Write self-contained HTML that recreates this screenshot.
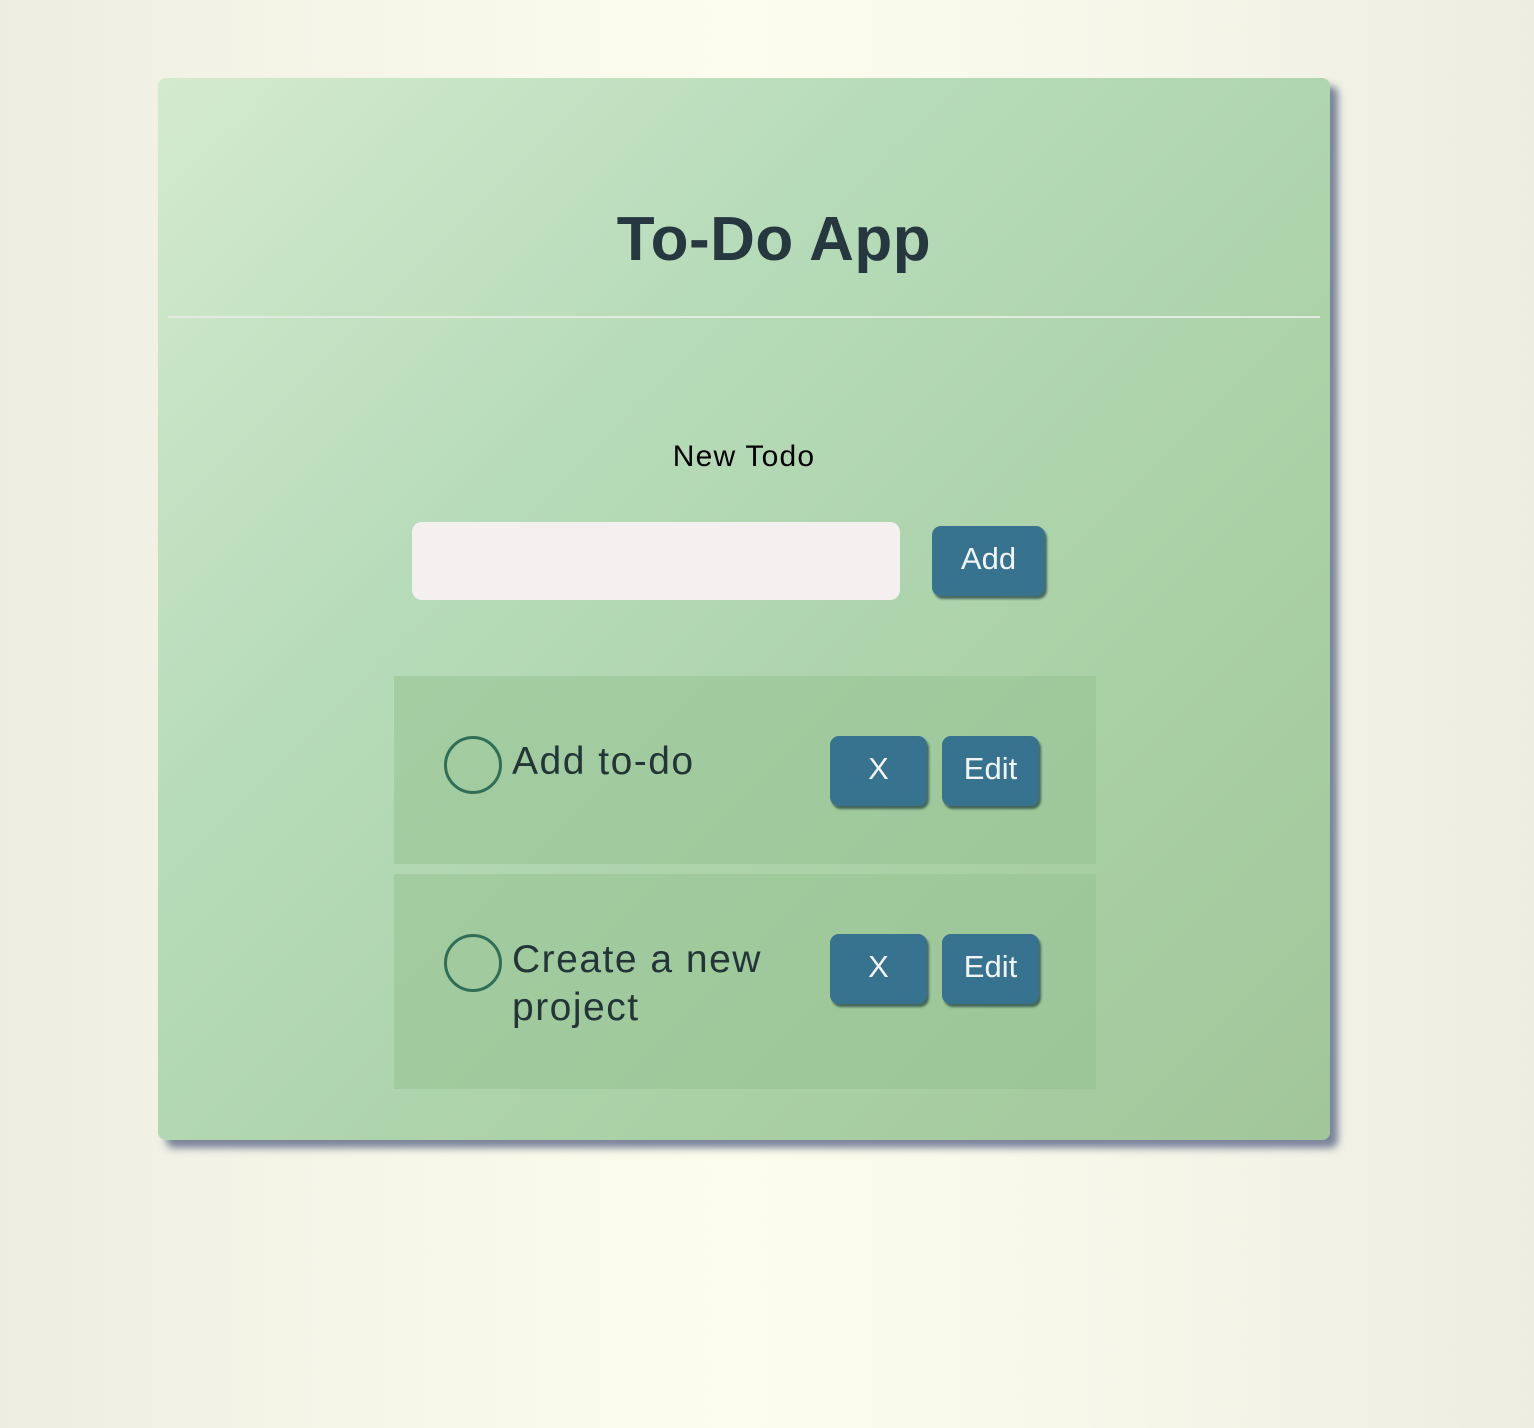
<!DOCTYPE html>
<html><head><meta charset="utf-8"><style>
html,body{margin:0;padding:0;width:1534px;height:1428px;overflow:hidden}
body{background:linear-gradient(90deg,#edede2 0%,#f8f8ea 30%,#fdfdee 48%,#f7f7ea 70%,#ededE2 100%);font-family:"Liberation Sans",sans-serif;position:relative}
.card{position:absolute;left:158px;top:78px;width:1172px;height:1062px;border-radius:8px;background:linear-gradient(135deg,#d4eacf 0%,#b6dbb8 35%,#aad0a6 70%,#a2c69a 100%);box-shadow:8px 8px 8px rgba(100,112,140,.85)}
h1{position:absolute;margin:0;left:0;width:1548px;text-align:center;top:204px;font-size:62px;font-weight:bold;color:#263740;letter-spacing:0.5px}
.hr{position:absolute;left:168px;top:316px;width:1152px;height:2px;background:#e4eadf}
.lbl{position:absolute;left:0;width:1488px;text-align:center;top:440px;font-size:30px;color:#000;letter-spacing:1.2px}
.inp{position:absolute;left:412px;top:522px;width:488px;height:78px;border-radius:10px;background:#f4f0ef}
.btn{position:absolute;background:#37728f;color:#f2f4f4;border-radius:9px;box-shadow:2px 3px 2px rgba(30,60,60,.7);font-size:31px;text-align:center}
.item{position:absolute;left:394px;width:702px;background:rgba(150,195,145,.55)}
.circ{position:absolute;width:52px;height:52px;border:3px solid #2f6e58;border-radius:50%}
.txt{position:absolute;left:512px;font-size:39px;line-height:48px;color:#233538;width:300px;letter-spacing:1.5px}
</style></head><body>
<div class="card"></div>
<h1>To-Do App</h1>
<div class="hr"></div>
<div class="lbl">New Todo</div>
<div class="inp"></div>
<div class="btn" style="left:932px;top:526px;width:113px;height:70px;line-height:66px">Add</div>
<div class="item" style="top:676px;height:188px"></div>
<div class="item" style="top:874px;height:215px"></div>
<div class="circ" style="left:444px;top:736px"></div>
<div class="txt" style="top:738px">Add to-do</div>
<div class="btn" style="left:830px;top:736px;width:97px;height:70px;line-height:66px">X</div>
<div class="btn" style="left:942px;top:736px;width:97px;height:70px;line-height:66px">Edit</div>
<div class="circ" style="left:444px;top:934px"></div>
<div class="txt" style="top:936px">Create a new project</div>
<div class="btn" style="left:830px;top:934px;width:97px;height:70px;line-height:66px">X</div>
<div class="btn" style="left:942px;top:934px;width:97px;height:70px;line-height:66px">Edit</div>
</body></html>
